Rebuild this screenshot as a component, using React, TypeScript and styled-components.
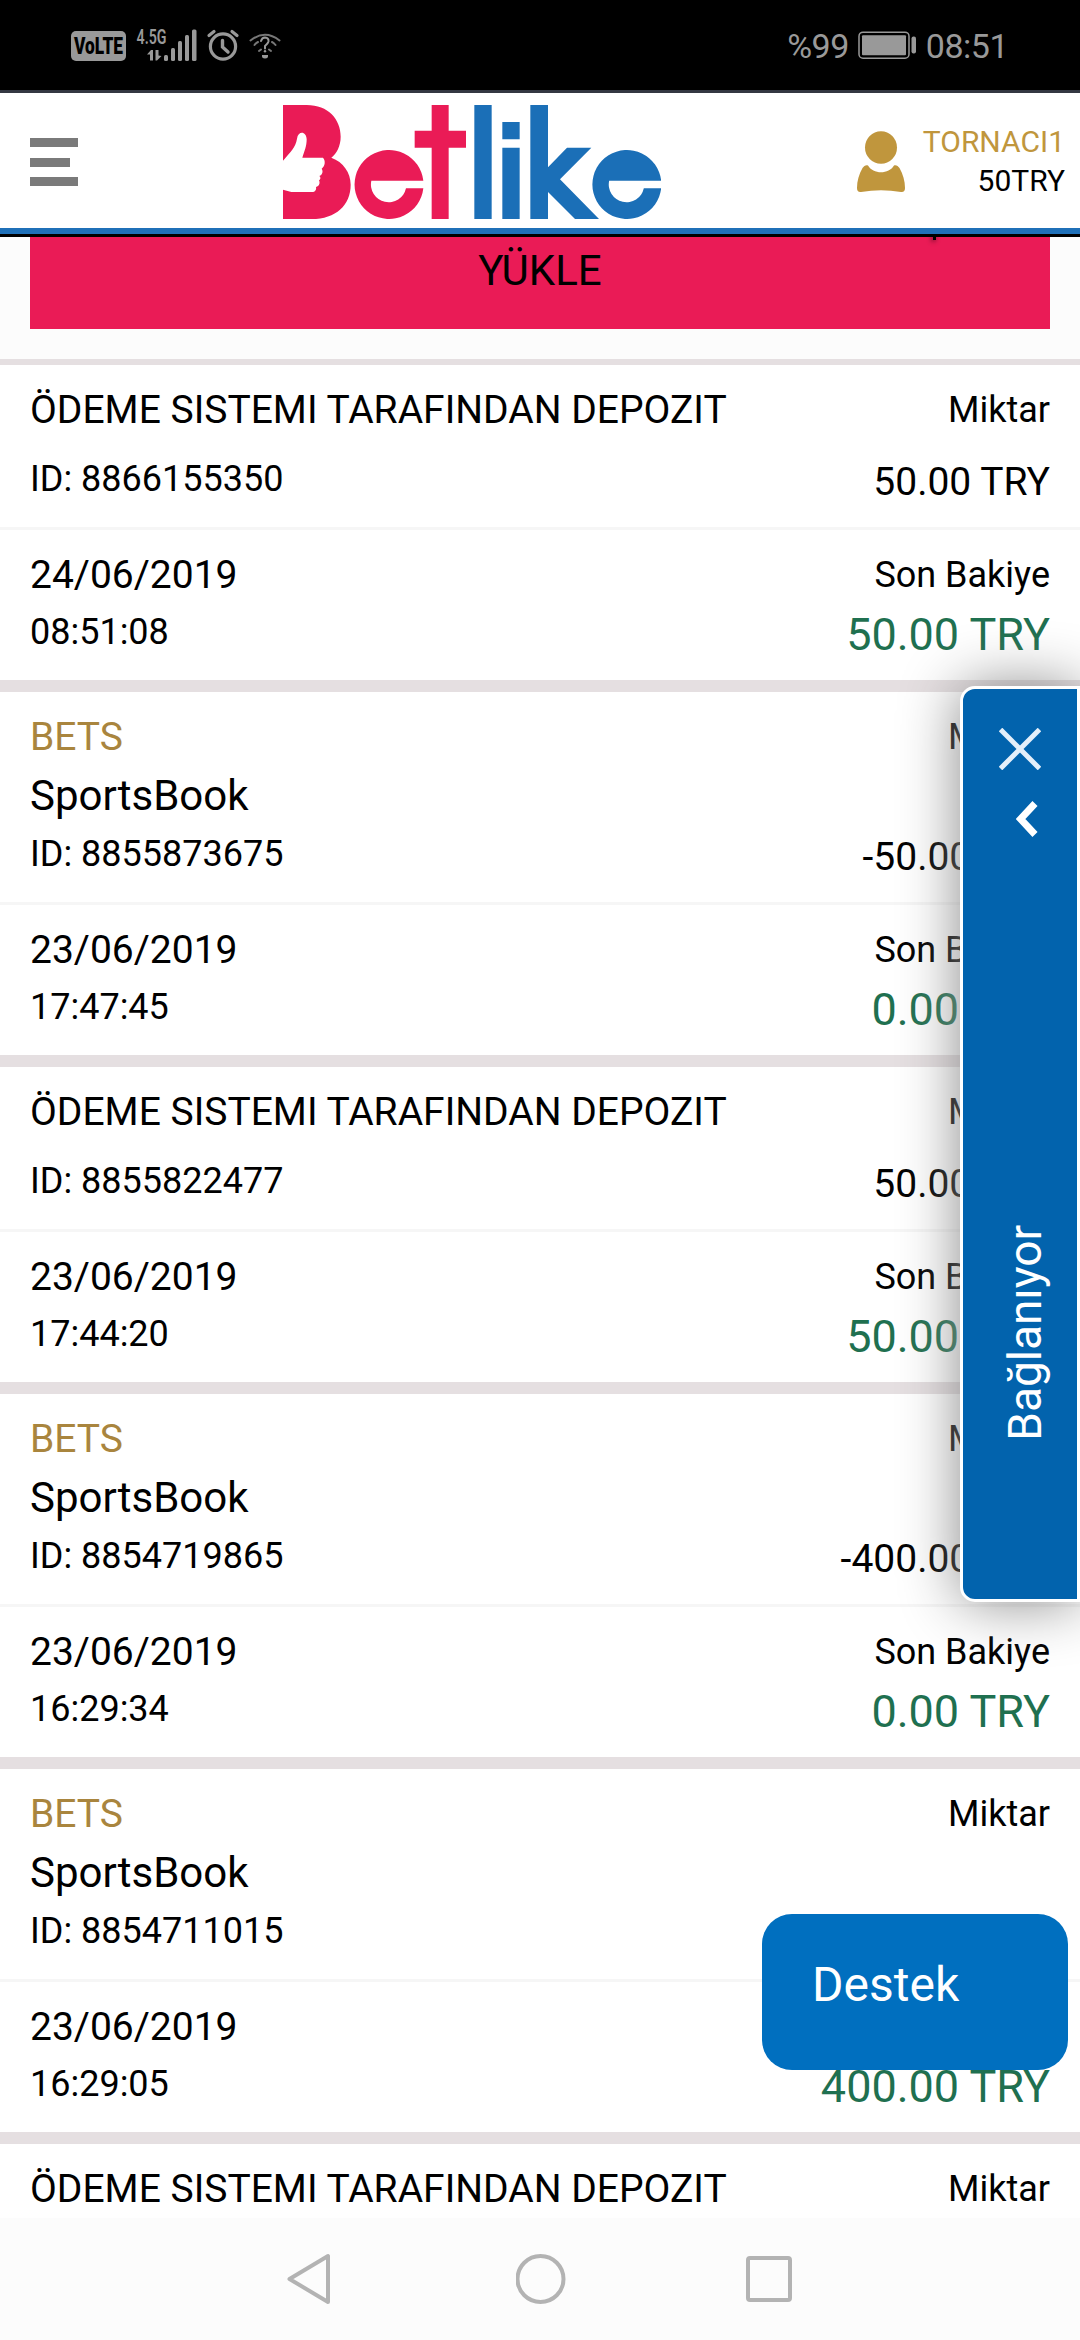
import React from "react";
import styled, { createGlobalStyle } from "styled-components";

const GlobalStyle = createGlobalStyle`
  * { box-sizing: border-box; }
  body { margin: 0; background: #fff; font-family: Roboto, "Liberation Sans", sans-serif; color: #000; }
`;

const PINK = "#ea1b56";
const BLUE = "#1f70b8";
const GOLD = "#c0963d";

const Screen = styled.div`
  position: relative;
  display: flex;
  flex-direction: column;
  width: 1080px;
  height: 2340px;
  overflow: hidden;
`;

const StatusBar = styled.div`
  flex: none;
  display: flex;
  justify-content: space-between;
  height: 93px;
  padding: 0 72px 0 71px;
  background: #000;
  border-bottom: 3px solid #343842;
  color: #999;
`;

const StatusClock = styled.div`
  display: flex;
  align-items: center;
  padding-top: 2px;
  font-size: 34px;
  letter-spacing: -0.5px;
  svg { margin: 0 8px 0 9px; }
`;

const Header = styled.header`
  flex: none;
  display: flex;
  align-items: center;
  height: 144px;
  padding: 0 15px 0 30px;
  background: #fff;
  border-bottom: 3px solid #000;
  box-shadow: inset 0 -6px 0 ${BLUE};
`;

const MenuButton = styled.div`
  display: flex;
  flex-direction: column;
  justify-content: space-between;
  width: 48px;
  height: 48px;
  margin-top: -3px;
  margin-right: 205px;
`;

const MenuLine = styled.span<{ $w: number }>`
  height: 9px;
  width: ${(p) => p.$w}px;
  background: #7a7a7a;
`;

const LogoSlot = styled.div`
  display: flex;
  margin-top: -3px;
`;

const Account = styled.div`
  display: flex;
  align-items: center;
  gap: 18px;
  margin-left: auto;
  margin-top: -3px;
`;

const AccountText = styled.div`
  display: flex;
  flex-direction: column;
  align-items: flex-end;
  margin-top: -2px;
  font-size: 30px;
  line-height: 39px;
`;

const AccountName = styled.span`
  color: ${GOLD};
`;

const Content = styled.main`
  flex: 1;
  min-height: 0;
  overflow: hidden;
`;

const DepositPanel = styled.section`
  height: 128px;
  padding: 0 30px 30px;
  background: #fcfcfc;
  border-bottom: 6px solid #e5dfe1;
`;

const DepositButton = styled.div`
  position: relative;
  display: flex;
  justify-content: center;
  height: 92px;
  background: ${PINK};
  font-size: 42px;
  line-height: 67px;
  overflow: hidden;
`;

const ScrolledDescender = styled.span`
  position: absolute;
  top: -2px;
  left: 903px;
  width: 3px;
  height: 5px;
  background: #000;
  box-shadow: -1px 1px 5px rgba(0, 0, 0, 0.8);
`;

const Record = styled.article`
  border-bottom: 12px solid #e5dfe1;
`;

const Half = styled.div`
  display: flex;
  justify-content: space-between;
  padding: 15px 30px;
  & + & { border-top: 3px solid #f6f6f6; }
`;

const Column = styled.div<{ $end?: boolean }>`
  display: flex;
  flex-direction: column;
  justify-content: ${(p) => (p.$end ? "space-between" : "flex-start")};
  align-items: ${(p) => (p.$end ? "flex-end" : "flex-start")};
`;

const Title = styled.span<{ $gold?: boolean }>`
  font-size: 39px;
  line-height: 60px;
  color: ${(p) => (p.$gold ? "#a9853e" : "#000")};
`;

const Product = styled.span`
  font-size: 42px;
  line-height: 57px;
`;

const RecordId = styled.span<{ $spaced?: boolean }>`
  margin-top: ${(p) => (p.$spaced ? 9 : 0)}px;
  margin-bottom: 3px;
  font-size: 36px;
  line-height: 60px;
`;

const Label = styled.span`
  font-size: 36px;
  line-height: 60px;
`;

const Amount = styled.span`
  font-size: 39px;
  line-height: 60px;
`;

const Time = styled.span`
  font-size: 36px;
  line-height: 54px;
`;

const Balance = styled.span`
  font-size: 45px;
  line-height: 60px;
  color: #1f7050;
`;

const ChatPanel = styled.aside`
  position: absolute;
  top: 686px;
  right: 0;
  display: flex;
  flex-direction: column;
  align-items: center;
  width: 120px;
  height: 916px;
  padding: 39px 0 0;
  background: #0263ad;
  border: 3px solid #fff;
  border-radius: 15px 0 0 15px;
  box-shadow: 0 0 60px #888;
`;

const ChatIcon = styled.div<{ $shift?: number }>`
  display: flex;
  padding-left: ${(p) => p.$shift ?? 0}px;
  margin-bottom: 30px;
`;

const ChatText = styled.div`
  margin-top: auto;
  margin-bottom: 158px;
  margin-left: 10px;
  writing-mode: vertical-rl;
  transform: rotate(180deg);
  font-size: 46px;
  line-height: 56px;
  color: #fff;
`;

const SupportButton = styled.div`
  position: absolute;
  top: 1914px;
  right: 12px;
  width: 306px;
  height: 156px;
  padding-left: 50px;
  border-radius: 30px;
  background: #006fbf;
  color: #fff;
  font-size: 48px;
  line-height: 141px;
`;

const NavBar = styled.nav`
  flex: none;
  display: flex;
  align-items: center;
  justify-content: center;
  gap: 180px;
  height: 122px;
  padding-right: 2px;
  background: #fcfcfc;
`;

const StatusIcons = () => (
  <svg width="230" height="90" viewBox="71 0 230 90" fill="#999">
    <rect x="71" y="31" width="55" height="30" rx="5" />
    <text x="74" y="54" fontSize="23" fontWeight="900" fontFamily="Roboto" textLength="49" lengthAdjust="spacingAndGlyphs" fill="#000">VoLTE</text>
    <text x="136.500" y="43.500" fontSize="20" fontWeight="600" fontFamily="Roboto" textLength="30" lengthAdjust="spacingAndGlyphs">4.5G</text>
    <path d="M147 54.500L151 50H153V60.500H150V54.500ZM155.500 50H158.500V55.500L161.500 56L157 60.500H155.500Z" />
    <rect x="164" y="55" width="4" height="6" rx="1.500" />
    <rect x="171" y="48" width="4" height="13" rx="1.500" />
    <rect x="178" y="41" width="4" height="20" rx="1.500" />
    <rect x="185" y="35" width="4" height="26" rx="1.500" />
    <rect x="192" y="29.500" width="4.500" height="31.500" rx="1.500" />
    <g fill="none" stroke="#999" strokeLinecap="round">
      <circle cx="223" cy="46.500" r="12.600" strokeWidth="3.200" />
      <path d="M222.500 40.500V47L228 52" strokeWidth="3.400" />
      <path d="M209 35.500L214 31.500M237 35.500L232 31.500" strokeWidth="3.200" />
    </g>
    <g fill="none" stroke="#777" strokeWidth="2" strokeLinecap="round">
      <path d="M250.500 40.500Q265 29 279.500 40.500" />
      <path d="M254.500 45Q256 43 258 42M275.500 45Q274 43 272 42M259 51L261 49.500M271 51L269 49.500" />
      <path d="M261 41Q262 37.500 265 37.500Q269 38 268.500 41.500Q268 43.500 265 46V48.500" stroke="#999" />
    </g>
    <circle cx="265" cy="51.300" r="1.200" />
    <path d="M262 55H268Q268.500 58.500 265 58.500Q261.500 58.500 262 55Z" />
  </svg>
);

const Battery = () => (
  <svg width="60" height="30" viewBox="0 0 60 30">
    <rect x="1" y="1.200" width="50" height="26" rx="4" fill="none" stroke="#999" strokeWidth="1.500" />
    <rect x="4" y="4.200" width="44" height="20" rx="1" fill="#999" />
    <rect x="53.500" y="5.500" width="4.500" height="17" rx="2" fill="#999" />
  </svg>
);

const E_PATH = "M460 272A103.500 103.500 0 1 0 460 295H408A52 52 0 0 1 304 272Z";

const Logo = () => (
  <svg width="378" height="114" viewBox="39 45 1134 342">
    <g fill={PINK}>
      <path d="M39 45H110C175 45 212 88 212 140C212 168 200 190 184 203C220 216 242 248 242 284C242 345 198 387 125 387H39V299L64 306H124C135 307 140 300 138 291C148 288 151 280 147 271C152 268 153 262 148 258C158 254 160 243 155 236C166 228 167 211 159 203H97C103 183 110 170 110 148C109 122 84 122 81 146C77 172 63 184 39 212Z" />
      <path d={E_PATH} />
      <path d="M485 45H536V122H588V173H536V387H485V173H434V122H485Z" />
    </g>
    <g fill="#1b6fb7">
      <path d="M613 45H665V387H613ZM697 96H749V148H697ZM697 173H749V387H697Z" />
      <path d="M781 45H834V232L891 173H964L870 268L987 387H915L834 306V387H781Z" />
      <path d={E_PATH} transform="translate(713.500 0)" />
    </g>
  </svg>
);

const UserIcon = () => (
  <svg width="48" height="62" viewBox="0 0 48 62" fill={GOLD}>
    <ellipse cx="24" cy="16.500" rx="16" ry="16.200" />
    <path d="M11 34.500C16 43.500 32 43.500 37 34.500C39 33.500 41 35 42.500 37C46 43 48 50 48 57Q48 61.500 44 61Q24 57.500 4 61Q0 61.500 0 57C0 50 2 43 5.500 37C7 35 9 33.500 11 34.500Z" />
  </svg>
);

interface Entry {
  id: string;
  date: string;
  time: string;
  amount: string;
  balance: string;
  bet?: boolean;
}

const ENTRIES: Entry[] = [
  { id: "8866155350", date: "24/06/2019", time: "08:51:08", amount: "50.00 TRY", balance: "50.00 TRY" },
  { id: "8855873675", date: "23/06/2019", time: "17:47:45", amount: "-50.00 TRY", balance: "0.00 TRY", bet: true },
  { id: "8855822477", date: "23/06/2019", time: "17:44:20", amount: "50.00 TRY", balance: "50.00 TRY" },
  { id: "8854719865", date: "23/06/2019", time: "16:29:34", amount: "-400.00 TRY", balance: "0.00 TRY", bet: true },
  { id: "8854711015", date: "23/06/2019", time: "16:29:05", amount: "", balance: "400.00 TRY", bet: true },
];

const DEPOSIT_TITLE = "ÖDEME SISTEMI TARAFINDAN DEPOZIT";

const EntryRecord = ({ entry }: { entry: Entry }) => (
  <Record>
    <Half>
      <Column>
        <Title $gold={entry.bet}>{entry.bet ? "BETS" : DEPOSIT_TITLE}</Title>
        {entry.bet && <Product>SportsBook</Product>}
        <RecordId $spaced={!entry.bet}>ID: {entry.id}</RecordId>
      </Column>
      <Column $end>
        <Label>Miktar</Label>
        <Amount>{entry.amount}</Amount>
      </Column>
    </Half>
    <Half>
      <Column>
        <Title>{entry.date}</Title>
        <Time>{entry.time}</Time>
      </Column>
      <Column $end>
        <Label>Son Bakiye</Label>
        <Balance>{entry.balance}</Balance>
      </Column>
    </Half>
  </Record>
);

export default function App() {
  return (
    <Screen>
      <GlobalStyle />
      <StatusBar>
        <StatusIcons />
        <StatusClock>
          %99
          <Battery />
          08:51
        </StatusClock>
      </StatusBar>
      <Header>
        <MenuButton>
          <MenuLine $w={48} />
          <MenuLine $w={40} />
          <MenuLine $w={48} />
        </MenuButton>
        <LogoSlot>
          <Logo />
        </LogoSlot>
        <Account>
          <UserIcon />
          <AccountText>
            <AccountName>TORNACI1</AccountName>
            <span>50TRY</span>
          </AccountText>
        </Account>
      </Header>
      <Content>
        <DepositPanel>
          <DepositButton>
            YÜKLE
            <ScrolledDescender />
          </DepositButton>
        </DepositPanel>
        {ENTRIES.map((entry) => (
          <EntryRecord key={entry.id} entry={entry} />
        ))}
        <Half>
          <Title>{DEPOSIT_TITLE}</Title>
          <Label>Miktar</Label>
        </Half>
      </Content>
      <NavBar>
        <svg width="50" height="52" viewBox="0 0 50 52" fill="none" stroke="#b3b3b3" strokeWidth="4" strokeLinejoin="round">
          <path d="M42 3V49L3.500 26Z" />
        </svg>
        <svg width="50" height="50" viewBox="0 0 50 50" fill="none" stroke="#b3b3b3" strokeWidth="4">
          <circle cx="24.500" cy="25" r="23" />
        </svg>
        <svg width="46" height="46" viewBox="0 0 46 46" fill="none" stroke="#b3b3b3" strokeWidth="4">
          <rect x="2" y="2" width="42" height="42" rx="2" />
        </svg>
      </NavBar>
      <ChatPanel>
        <ChatIcon>
          <svg width="42" height="42" viewBox="0 0 42 42" stroke="#e4effa" strokeWidth="5">
            <path d="M1.500 1.500L40.500 40.500M40.500 1.500L1.500 40.500" />
          </svg>
        </ChatIcon>
        <ChatIcon $shift={14}>
          <svg width="22" height="38" viewBox="0 0 22 38" fill="none" stroke="#fff" strokeWidth="7">
            <path d="M19 3.500L4.500 19L19 34.500" />
          </svg>
        </ChatIcon>
        <ChatText>Bağlanıyor</ChatText>
      </ChatPanel>
      <SupportButton>Destek</SupportButton>
    </Screen>
  );
}
